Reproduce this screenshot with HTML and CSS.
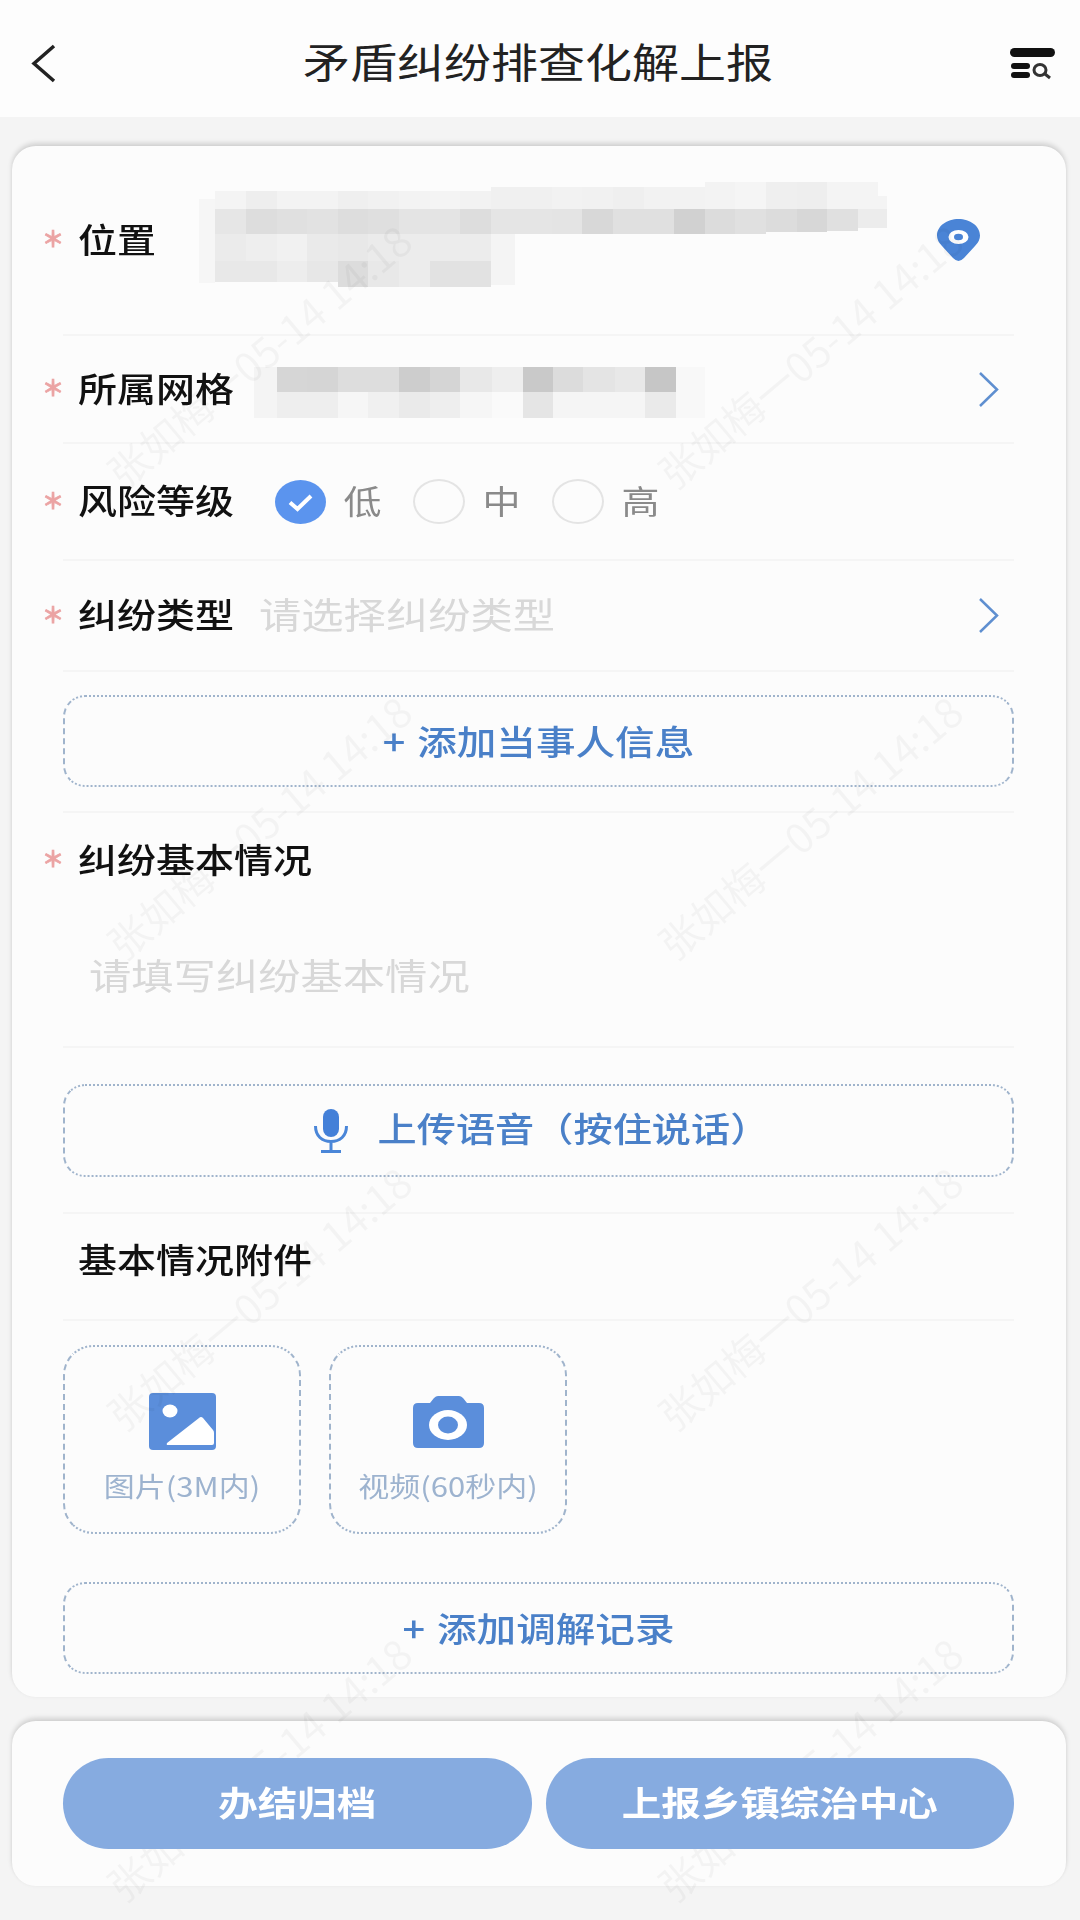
FILE: index.html
```html
<!DOCTYPE html>
<html lang="zh-CN">
<head>
<meta charset="utf-8">
<title>矛盾纠纷排查化解上报</title>
<link rel="stylesheet" href="styles.css">
</head>
<body>
<div class="page">
  <header class="topbar">
    <svg class="back" viewBox="0 0 25 39"><path d="M23 2 3 19.500 23 37"/></svg>
    <h1 class="title">矛盾纠纷排查化解上报</h1>
    <svg class="search" viewBox="1010 48 45 32">
      <rect x="1010" y="48" width="45" height="9" rx="4.500"/>
      <rect x="1011" y="63" width="19" height="6" rx="3"/>
      <rect x="1011" y="72" width="19" height="6" rx="3"/>
      <ellipse class="lens" cx="1040" cy="70" rx="6" ry="5.500"/>
      <path class="lens" d="M1045 74l5 4"/>
    </svg>
  </header>

  <main class="card form">
    <div class="row row-location">
      <span class="star">＊</span><span class="label">位置</span>
      <svg class="mosaic mosaic-location" viewBox="197 180 690 110" shape-rendering="crispEdges">
        <rect x="199" y="200" width="16" height="84" fill="#f6f6f6"/>
        <g>
          <rect x="215" y="192" width="31" height="18" fill="#f4f4f4"/><rect x="246" y="192" width="31" height="18" fill="#eeeeee"/><rect x="277" y="192" width="30" height="18" fill="#f3f3f3"/><rect x="307" y="192" width="31" height="18" fill="#f3f3f3"/><rect x="338" y="192" width="30" height="18" fill="#efefef"/><rect x="368" y="192" width="31" height="18" fill="#f1f1f1"/><rect x="399" y="192" width="31" height="18" fill="#f3f3f3"/><rect x="430" y="192" width="30" height="18" fill="#f4f4f4"/><rect x="460" y="192" width="31" height="18" fill="#f2f2f2"/><rect x="491" y="188" width="30" height="22" fill="#f0f0f0"/><rect x="521" y="188" width="31" height="22" fill="#f0f0f0"/><rect x="552" y="188" width="30" height="22" fill="#f2f2f2"/><rect x="582" y="188" width="31" height="22" fill="#f1f1f1"/><rect x="613" y="188" width="31" height="22" fill="#efefef"/><rect x="644" y="188" width="30" height="22" fill="#f2f2f2"/><rect x="674" y="188" width="31" height="22" fill="#f2f2f2"/><rect x="705" y="183" width="30" height="27" fill="#f3f3f3"/><rect x="735" y="183" width="31" height="27" fill="#f5f5f5"/><rect x="766" y="183" width="31" height="27" fill="#efefef"/><rect x="797" y="183" width="30" height="27" fill="#eeeeee"/><rect x="827" y="183" width="31" height="27" fill="#f4f4f4"/><rect x="858" y="183" width="20" height="27" fill="#f4f4f4"/><rect x="878" y="197" width="9" height="13" fill="#f4f4f4"/>
        </g>
        <g>
          <rect x="215" y="210" width="31" height="25" fill="#e6e6e6"/><rect x="246" y="210" width="31" height="25" fill="#dddddd"/><rect x="277" y="210" width="30" height="25" fill="#e0e0e0"/><rect x="307" y="210" width="31" height="25" fill="#e2e2e2"/><rect x="338" y="210" width="30" height="25" fill="#dddddd"/><rect x="368" y="210" width="31" height="25" fill="#dfdfdf"/><rect x="399" y="210" width="31" height="25" fill="#e4e4e4"/><rect x="430" y="210" width="30" height="25" fill="#e4e4e4"/><rect x="460" y="210" width="31" height="25" fill="#dddddd"/><rect x="491" y="210" width="30" height="25" fill="#e5e5e5"/><rect x="521" y="210" width="31" height="25" fill="#e5e5e5"/><rect x="552" y="210" width="30" height="25" fill="#e4e4e4"/><rect x="582" y="210" width="31" height="25" fill="#d8d8d8"/><rect x="613" y="210" width="31" height="25" fill="#e0e0e0"/><rect x="644" y="210" width="30" height="25" fill="#e0e0e0"/><rect x="674" y="210" width="31" height="25" fill="#d1d1d1"/><rect x="705" y="210" width="30" height="25" fill="#dcdcdc"/><rect x="735" y="210" width="31" height="25" fill="#e0e0e0"/><rect x="766" y="210" width="31" height="23" fill="#dcdcdc"/><rect x="797" y="210" width="30" height="23" fill="#d7d7d7"/><rect x="827" y="210" width="31" height="22" fill="#e0e0e0"/><rect x="858" y="210" width="29" height="19" fill="#ececec"/>
        </g>
        <g>
          <rect x="215" y="235" width="31" height="27" fill="#ebebeb"/><rect x="246" y="235" width="31" height="27" fill="#eeeeee"/><rect x="277" y="235" width="30" height="27" fill="#f1f1f1"/><rect x="307" y="235" width="31" height="27" fill="#eaeaea"/><rect x="338" y="235" width="30" height="27" fill="#e8e8e8"/><rect x="368" y="235" width="31" height="27" fill="#ebebeb"/><rect x="399" y="235" width="31" height="27" fill="#ececec"/><rect x="430" y="235" width="30" height="27" fill="#ececec"/><rect x="460" y="235" width="31" height="27" fill="#ececec"/><rect x="491" y="235" width="24" height="27" fill="#f4f4f4"/>
        </g>
        <g>
          <rect x="215" y="262" width="31" height="21" fill="#e8e8e8"/><rect x="246" y="262" width="31" height="21" fill="#e8e8e8"/><rect x="277" y="262" width="30" height="21" fill="#ededed"/><rect x="307" y="262" width="31" height="21" fill="#e7e7e7"/><rect x="338" y="262" width="30" height="26" fill="#dcdcdc"/><rect x="368" y="262" width="31" height="26" fill="#e8e8e8"/><rect x="399" y="262" width="31" height="26" fill="#ececec"/><rect x="430" y="262" width="30" height="26" fill="#e2e2e2"/><rect x="460" y="262" width="31" height="26" fill="#e2e2e2"/><rect x="491" y="262" width="24" height="24" fill="#f4f4f4"/>
        </g>
      </svg>
      <svg class="pin" viewBox="937 219 43 42">
        <path d="M958.500 261Q956 261 953 258L942 246Q937 241 937 235.500C937 226 947 219 958.500 219S980 226 980 235.500Q980 241 975 246L964 258Q961 261 958.500 261Z"/>
        <ellipse class="pin-eye" cx="958.500" cy="237" rx="10" ry="7"/>
        <ellipse cx="958.500" cy="237" rx="4.500" ry="3.200"/>
      </svg>
    </div>

    <div class="row row-grid">
      <span class="star">＊</span><span class="label">所属网格</span>
      <svg class="mosaic mosaic-grid" viewBox="252 366 455 55" shape-rendering="crispEdges">
        <rect x="254" y="368" width="23" height="51" fill="#f4f4f4"/><rect x="676" y="368" width="29" height="51" fill="#f8f8f8"/>
        <g>
          <rect x="277" y="368" width="30" height="25" fill="#d6d6d6"/><rect x="307" y="368" width="31" height="25" fill="#d5d5d5"/><rect x="338" y="368" width="30" height="25" fill="#dddddd"/><rect x="368" y="368" width="31" height="25" fill="#dddddd"/><rect x="399" y="368" width="31" height="25" fill="#cdcdcd"/><rect x="430" y="368" width="30" height="25" fill="#d5d5d5"/><rect x="460" y="368" width="32" height="25" fill="#e8e8e8"/><rect x="492" y="368" width="31" height="25" fill="#eeeeee"/><rect x="523" y="368" width="30" height="25" fill="#c9c9c9"/><rect x="553" y="368" width="30" height="25" fill="#dcdcdc"/><rect x="583" y="368" width="32" height="25" fill="#e4e4e4"/><rect x="615" y="368" width="30" height="25" fill="#e8e8e8"/><rect x="645" y="368" width="31" height="25" fill="#c6c6c6"/>
        </g>
        <g>
          <rect x="277" y="393" width="30" height="26" fill="#eeeeee"/><rect x="307" y="393" width="31" height="26" fill="#eeeeee"/><rect x="338" y="393" width="30" height="26" fill="#f6f6f6"/><rect x="368" y="393" width="31" height="26" fill="#f0f0f0"/><rect x="399" y="393" width="31" height="26" fill="#eaeaea"/><rect x="430" y="393" width="30" height="26" fill="#eeeeee"/><rect x="460" y="393" width="32" height="26" fill="#f6f6f6"/><rect x="492" y="393" width="31" height="26" fill="#fafafa"/><rect x="523" y="393" width="30" height="26" fill="#e5e5e5"/><rect x="553" y="393" width="30" height="26" fill="#f5f5f5"/><rect x="583" y="393" width="32" height="26" fill="#f5f5f5"/><rect x="615" y="393" width="30" height="26" fill="#f5f5f5"/><rect x="645" y="393" width="31" height="26" fill="#eaeaea"/>
        </g>
      </svg>
      <svg class="chevron" viewBox="0 0 21 35"><path d="M2 1 19 17.500 2 34"/></svg>
    </div>

    <div class="row row-risk">
      <span class="star">＊</span><span class="label">风险等级</span>
      <div class="radios">
        <svg class="radio" viewBox="0 0 51 44"><ellipse class="radio-on" cx="25.500" cy="22" rx="25.500" ry="22"/><path class="radio-tick" d="M15 22.500 22.500 29 36 16"/></svg>
        <span class="radio-text">低</span>
        <span class="radio-off"></span>
        <span class="radio-text">中</span>
        <span class="radio-off"></span>
        <span class="radio-text">高</span>
      </div>
    </div>

    <div class="row row-type">
      <span class="star">＊</span><span class="label">纠纷类型</span>
      <span class="hint">请选择纠纷类型</span>
      <svg class="chevron" viewBox="0 0 21 35"><path d="M2 1 19 17.500 2 34"/></svg>
    </div>

    <div class="block block-party">
      <button class="dashed"><span class="action">+ 添加当事人信息</span></button>
    </div>

    <div class="block block-desc">
      <div class="desc-head"><span class="star">＊</span><span class="label">纠纷基本情况</span></div>
      <div class="desc-body"><span class="hint">请填写纠纷基本情况</span></div>
    </div>

    <div class="block block-voice">
      <button class="dashed dashed-voice">
        <svg class="mic" viewBox="0 0 34 44">
          <rect class="mic-head" x="9" y="0" width="16" height="28" rx="8"/>
          <path class="mic-line" d="M1.500 17C1.500 27 8 32.500 17 32.500S32.500 27 32.500 17M17 33V42M7 42.500H27"/>
        </svg>
        <span class="action action-voice">上传语音（按住说话）</span>
      </button>
    </div>

    <div class="row row-attach"><span class="label">基本情况附件</span></div>

    <div class="tiles">
      <div class="tile">
        <svg class="tile-icon icon-image" viewBox="148 1393 67 57">
          <rect x="148" y="1393" width="67" height="57" rx="4"/>
          <ellipse class="hole" cx="169" cy="1411" rx="7.500" ry="6.500"/>
          <path class="hole" d="M167 1445Q165 1445 166 1443L198 1418Q200 1416 202 1418L212 1430Q213 1431 213 1433V1443Q213 1445 211 1445Z"/>
        </svg>
        <span class="tile-text">图片(3M内)</span>
      </div>
      <div class="tile">
        <svg class="tile-icon icon-camera" viewBox="412 1396 71 52">
          <path d="M417 1403H429L433 1398Q435 1396 437 1396H458Q460 1396 462 1398L466 1403H478Q483 1403 483 1408V1443Q483 1448 478 1448H417Q412 1448 412 1443V1408Q412 1403 417 1403Z"/>
          <ellipse class="hole" cx="447" cy="1425" rx="19" ry="15"/>
          <ellipse cx="447" cy="1425" rx="10" ry="8.500"/>
        </svg>
        <span class="tile-text">视频(60秒内)</span>
      </div>
    </div>

    <button class="dashed dashed-record"><span class="action">+ 添加调解记录</span></button>
  </main>

  <footer class="card actions">
    <button class="pill"><span class="pill-text">办结归档</span></button>
    <button class="pill"><span class="pill-text">上报乡镇综治中心</span></button>
  </footer>

  <div class="watermarks" aria-hidden="true">
    <span class="mark">张如梅一05-14 14:18</span><span class="mark">张如梅一05-14 14:18</span>
    <span class="mark">张如梅一05-14 14:18</span><span class="mark">张如梅一05-14 14:18</span>
    <span class="mark">张如梅一05-14 14:18</span><span class="mark">张如梅一05-14 14:18</span>
    <span class="mark">张如梅一05-14 14:18</span><span class="mark">张如梅一05-14 14:18</span>
  </div>
</div>
</body>
</html>
```
FILE: styles.css
```css
* { box-sizing: border-box; }
html, body { margin: 0; padding: 0; }
body {
  width: 1080px;
  height: 1920px;
  overflow: hidden;
  background: #f4f4f4;
  font-family: "Noto Sans CJK SC", "Noto Sans", sans-serif;
  color: #1c1c1c;
}
.page {
  position: relative;
  width: 1080px;
  height: 1920px;
  overflow: hidden;
  filter: blur(0.7px);
}
button { font: inherit; padding: 0; background: none; }

/* top bar */
.topbar {
  display: flex;
  align-items: center;
  height: 117px;
  padding: 10px 25px 0 31px;
  background: #fdfdfd;
}
.back { width: 25px; height: 39px; flex: none; }
.back path { fill: none; stroke: #222; stroke-width: 3.500; }
.title {
  flex: 1;
  margin: 0 0 0 10px;
  text-align: center;
  font-size: 47px;
  font-weight: 400;
  line-height: 1;
  color: #222;
  transform: translateY(-3px) scaleY(0.87);
}
.search { width: 45px; height: 32px; flex: none; margin-top: 1px; }
.search rect { fill: #111; }
.lens { fill: none; stroke: #333; stroke-width: 3; }

/* cards */
.card {
  margin: 0 14px 0 12px;
  background: #fcfcfc;
  border-radius: 24px;
  box-shadow: 0 -3px 5px rgba(0, 0, 0, 0.14), 0 0 4px rgba(0, 0, 0, 0.04);
}
.form {
  margin-top: 29px;
  padding: 0 52px 23px 51px;
}
.actions {
  margin-top: 24px;
  padding: 37px 52px 37px 51px;
  display: flex;
  gap: 14px;
}

/* rows */
.row {
  display: flex;
  align-items: center;
  border-bottom: 2px solid #f5f5f5;
}
.row-location { height: 190px; }
.row-grid { height: 108px; }
.row-risk { height: 117px; }
.row-type { height: 111px; }
.row-attach { height: 107px; padding: 0 0 12px 15px; }

.star {
  flex: none;
  width: 37px;
  margin-left: -22px;
  padding-right: 13px;
  font-size: 22px;
  font-weight: 700;
  line-height: 1;
  text-align: center;
  color: #eba3a3;
  -webkit-text-stroke: 0.8px #eba3a3;
  transform: translateY(-3px);
}
.label {
  flex: none;
  font-size: 39px;
  font-weight: 500;
  line-height: 1;
  color: #111;
  transform: translateY(-2px) scaleY(0.87);
}
.hint {
  display: inline-block;
  font-size: 42.300px;
  line-height: 1;
  color: #d8d8d8;
  transform: translateY(-2px) scaleY(0.87);
}
.row-type .hint { margin-left: 25px; }

.mosaic { flex: none; display: block; }
.mosaic-location { width: 690px; height: 110px; margin: 0 0 12px 41px; }
.mosaic-grid { width: 455px; height: 55px; margin: 7px 0 0 18px; }

.pin { flex: none; width: 43px; height: 42px; margin-left: 50px; }
.pin path, .pin ellipse { fill: #4a84d6; }
.pin .pin-eye { fill: #fff; }

.chevron { flex: none; width: 21px; height: 35px; margin-left: auto; margin-right: 15px; }
.chevron path { fill: none; stroke: #5f8fd0; stroke-width: 2.500; }

/* radios */
.radios { display: flex; align-items: center; margin-left: 40.500px; }
.radio { width: 51px; height: 44px; flex: none; }
.radio-on { fill: #5b94ee; }
.radio-tick { fill: none; stroke: #fff; stroke-width: 4; }
.radio-off {
  flex: none;
  width: 52px;
  height: 45px;
  margin-left: 31px;
  border: 2px solid #e4e4e4;
  border-radius: 50%;
}
.radio-text {
  flex: none;
  margin-left: 18px;
  font-size: 38px;
  line-height: 1;
  color: #8a8a8a;
  transform: translateY(-2px) scaleY(0.87);
}

/* blocks */
.block { border-bottom: 2px solid #f5f5f5; }
.block-party { height: 141px; padding-top: 23px; }
.block-desc { height: 235px; }
.block-voice { height: 166px; padding-top: 36px; }
.desc-head { display: flex; align-items: center; height: 94px; }
.desc-body { display: flex; align-items: center; height: 139px; padding-left: 26px; }

/* dashed buttons */
.dashed {
  display: flex;
  align-items: center;
  justify-content: center;
  width: 100%;
  height: 92px;
  border-width: 2px;
  border-color: #a0b4cc;
  border-style: dotted dashed;
  border-radius: 22px;
  color: #4a80c8;
}
.dashed-voice { height: 93px; gap: 30px; padding-left: 6px; }
.dashed-record { margin-top: 48px; }
.action {
  font-size: 39.600px;
  font-weight: 500;
  line-height: 1;
  word-spacing: 3px;
  color: #4a80c8;
  transform: translateY(-1px) scaleY(0.87);
}
.action-voice { font-size: 39.200px; transform: translateY(-3px) scaleY(0.87); }
.mic { width: 34px; height: 44px; flex: none; }
.mic-head { fill: #4480d8; }
.mic-line { fill: none; stroke: #4a86d8; stroke-width: 3; }

/* upload tiles */
.tiles { display: flex; gap: 28px; margin-top: 24px; }
.tile {
  display: flex;
  flex-direction: column;
  align-items: center;
  width: 238px;
  height: 189px;
  padding-top: 46px;
  border-width: 2px;
  border-color: #a0b4cc;
  border-style: dotted dashed;
  border-radius: 30px;
}
.tile-icon { display: block; fill: #5b8edb; flex: none; }
.tile-icon .hole { fill: #fff; }
.icon-image { width: 67px; height: 57px; margin-bottom: 21px; }
.icon-camera { width: 71px; height: 52px; margin: 3px 0 23px; }
.tile-text {
  font-size: 31px;
  line-height: 1;
  color: #9db3cf;
  white-space: nowrap;
  transform: translateY(-1px) scaleY(0.87);
}

/* bottom buttons */
.pill {
  position: relative;
  z-index: 2;
  flex: 1;
  height: 91px;
  border: 0;
  border-radius: 46px;
  background: #86abe0;
}
.pill-text {
  display: inline-block;
  font-size: 39.500px;
  font-weight: 700;
  line-height: 1;
  color: #fff;
  transform: translateY(-2px) scaleY(0.87);
}

/* watermark layer lies over the page */
.watermarks {
  position: absolute;
  left: -17px;
  top: 120px;
  display: grid;
  grid-template-columns: 551px 551px;
  grid-auto-rows: 471px;
  pointer-events: none;
}
.mark {
  align-self: center;
  justify-self: center;
  font-size: 41px;
  line-height: 1;
  white-space: nowrap;
  color: rgba(0, 0, 0, 0.035);
  transform: rotate(-40deg);
}
```
